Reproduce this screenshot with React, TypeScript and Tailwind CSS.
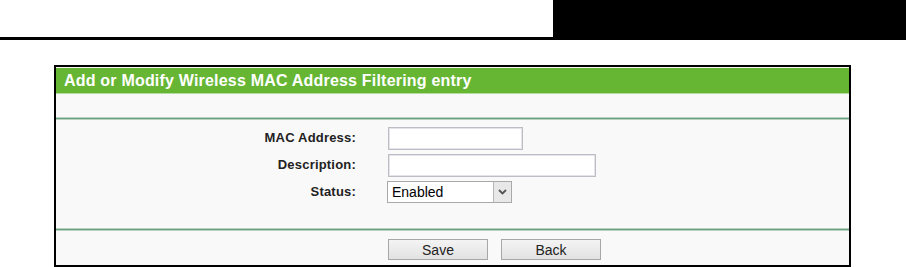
import React from "react";

export default function App() {
  return (
    <div className="w-[906px] h-[267px] bg-white overflow-hidden" style={{ fontFamily: '"Liberation Sans", Arial, sans-serif' }}>
      <div className="flex h-[40px]">
        <div className="w-[553px] h-[40px] border-b-[3px] border-black" />
        <div className="flex-1 bg-black" />
      </div>
      <div className="ml-[54px] mt-[25px] w-[797px] h-[202px] border-2 border-black bg-[#f9f9f9] pt-[1px] flex flex-col">
        <div className="h-[26px] bg-[#66b634] border-b border-[#b5dca0] flex items-center pl-[8px] text-white font-bold text-[16px] tracking-[0.2px]">
          Add or Modify Wireless MAC Address Filtering entry
        </div>
        <div className="h-[23px]" />
        <div className="h-[3px] bg-[#6b9f80] border-y border-[#b9d3c3]" />
        <div className="h-[108px] flex flex-col pt-[6px] gap-[3px] text-[13px] text-[#222]">
          <div className="flex items-center h-[24px]">
            <div className="w-[300px] text-right font-bold tracking-[0.2px]">MAC Address:</div>
            <div className="ml-[32px] w-[135px] h-[23px] bg-white border border-[#bdbdc6] shadow-[inset_0_0_0_1px_#e4e4ea]" />
          </div>
          <div className="flex items-center h-[24px]">
            <div className="w-[300px] text-right font-bold tracking-[0.2px]">Description:</div>
            <div className="ml-[32px] w-[208px] h-[23px] bg-white border border-[#bdbdc6] shadow-[inset_0_0_0_1px_#e4e4ea]" />
          </div>
          <div className="flex items-center h-[24px]">
            <div className="w-[300px] text-right font-bold tracking-[0.2px]">Status:</div>
            <div className="ml-[31px] w-[125px] h-[22px] bg-white border border-[#a9a9a9] flex items-center">
              <div className="flex-1 pl-[4px] text-[14px] text-black">Enabled</div>
              <div className="w-[18px] h-[20px] bg-[#e8e8e8] border-l border-[#b8b8b8] flex items-center justify-center">
                <svg width="9" height="6" viewBox="0 0 9 6">
                  <path d="M1 1 L4.5 4.5 L8 1" stroke="#555" strokeWidth="1.8" fill="none" />
                </svg>
              </div>
            </div>
          </div>
        </div>
        <div className="h-[3px] bg-[#6b9f80] border-y border-[#b9d3c3]" />
        <div className="flex-1 flex pt-[8px] pl-[332px] gap-[13px]">
          <button className="w-[100px] h-[21px] border border-[#a7a7a7] bg-gradient-to-b from-[#f4f4f4] to-[#e2e2e2] text-[14px] text-[#222] leading-none">Save</button>
          <button className="w-[100px] h-[21px] border border-[#a7a7a7] bg-gradient-to-b from-[#f4f4f4] to-[#e2e2e2] text-[14px] text-[#222] leading-none">Back</button>
        </div>
      </div>
    </div>
  );
}
